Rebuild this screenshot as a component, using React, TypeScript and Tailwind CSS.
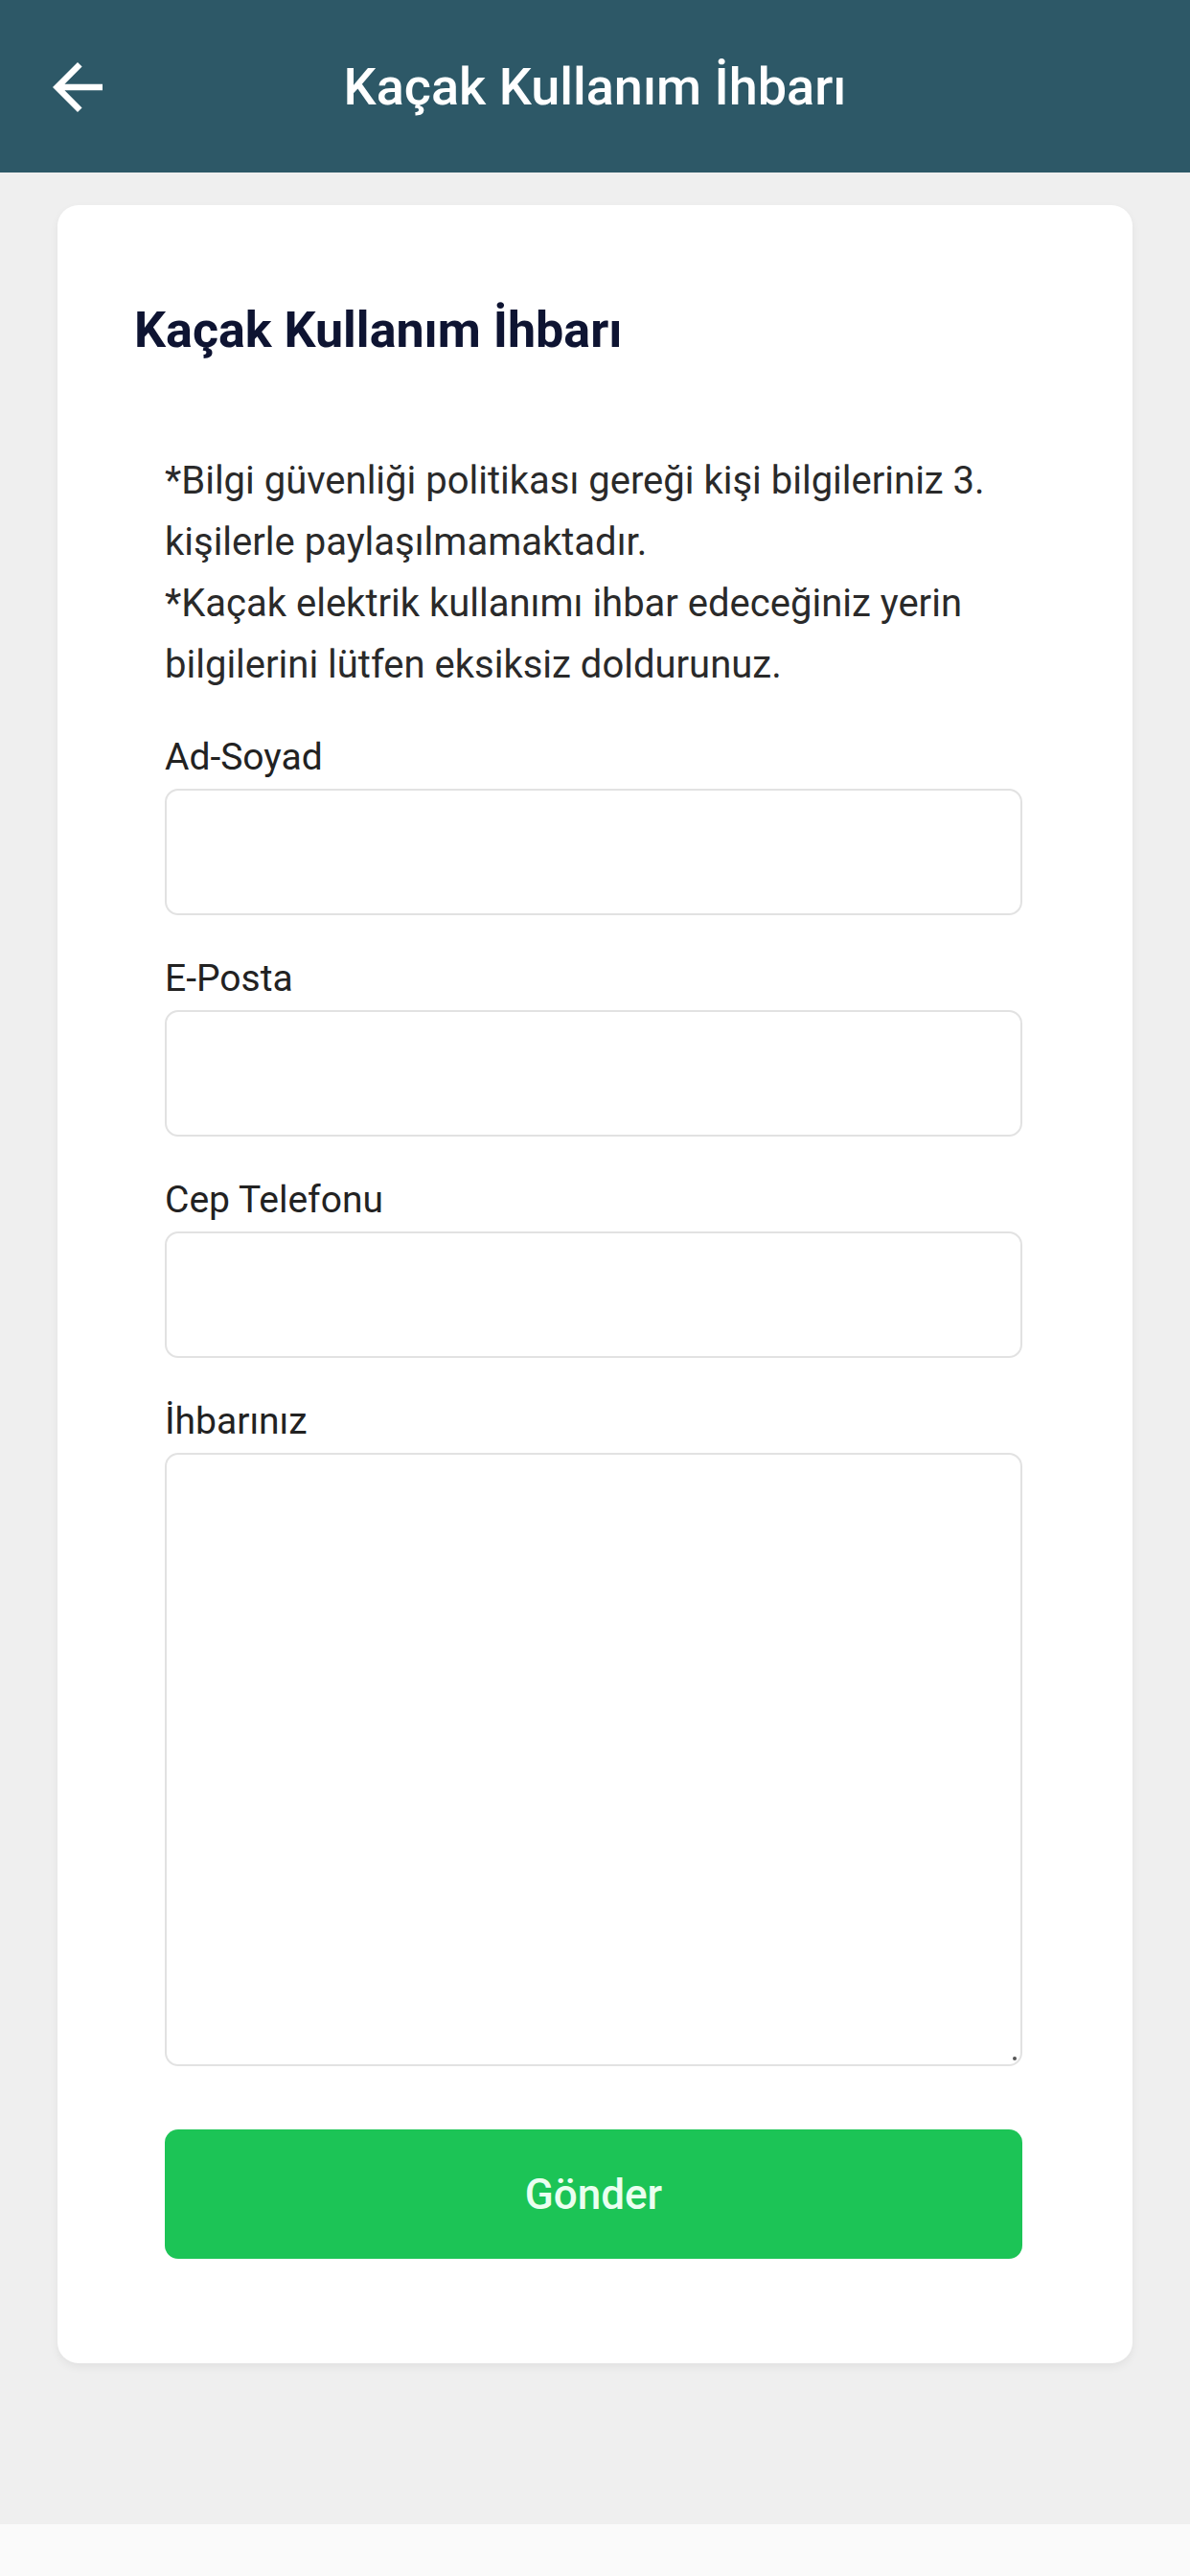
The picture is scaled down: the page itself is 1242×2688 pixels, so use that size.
import { useState } from "react"

const fields = [
  { id: "name", label: "Ad-Soyad", type: "text" },
  { id: "email", label: "E-Posta", type: "email" },
  { id: "phone", label: "Cep Telefonu", type: "tel" },
]

function BackArrow() {
  return (
    <svg viewBox="0 0 24 24" className="h-[78px] w-[78px] fill-white">
      <path d="M20 11H7.83l5.59-5.59L12 4l-8 8 8 8 1.41-1.41L7.83 13H20v-2z" />
    </svg>
  )
}

export default function App() {
  const [values, setValues] = useState<Record<string, string>>({})

  return (
    <div className="flex min-h-[2688px] flex-col bg-[#efefef] font-['Roboto',sans-serif]">
      {/* top bar */}
      <header className="relative flex h-[180px] items-center justify-center bg-[#2d5867]">
        <button className="absolute left-[42px] top-[52px]">
          <BackArrow />
        </button>
        <h1 className="text-[54px] font-medium text-white">Kaçak Kullanım İhbarı</h1>
      </header>

      <main className="flex-1 px-[60px] pt-[34px]">
        <div className="rounded-[22px] bg-white pb-[109px] pl-[80px] pr-[83px] pt-[103px] shadow-[0_4px_10px_rgba(0,0,0,0.06)]">
          <h2 className="text-[52px] font-bold leading-[56px] text-[#0e1432]">Kaçak Kullanım İhbarı</h2>

          <div className="pl-[32px] pr-[32px] pt-[97px]">
            <p className="text-[40px] leading-[64px] text-[#2a2a2a]">
              *Bilgi güvenliği politikası gereği kişi bilgileriniz 3.
              <br />
              kişilerle paylaşılmamaktadır.
              <br />
              *Kaçak elektrik kullanımı ihbar edeceğiniz yerin
              <br />
              bilgilerini lütfen eksiksiz doldurunuz.
            </p>

            <div className="mt-[42px] flex flex-col gap-[44px]">
              {fields.map(f => (
                <div key={f.id} className="flex flex-col gap-[11px]">
                  <label htmlFor={f.id} className="text-[39px] leading-[44px] text-[#222]">
                    {f.label}
                  </label>
                  <input
                    id={f.id}
                    type={f.type}
                    value={values[f.id] ?? ""}
                    onChange={e => setValues({ ...values, [f.id]: e.target.value })}
                    className="h-[132px] w-full rounded-[14px] border-2 border-[#e2e2e2] bg-white px-6 text-[36px] outline-none"
                  />
                </div>
              ))}

              <div className="flex flex-col gap-[11px]">
                <label htmlFor="note" className="text-[39px] leading-[44px] text-[#222]">
                  İhbarınız
                </label>
                <div className="relative">
                  <textarea
                    id="note"
                    value={values.note ?? ""}
                    onChange={e => setValues({ ...values, note: e.target.value })}
                    className="block h-[640px] w-full resize-none rounded-[14px] border-2 border-[#e2e2e2] bg-white p-6 text-[36px] outline-none"
                  />
                  <span className="absolute bottom-[6px] right-[6px] h-[4px] w-[4px] rounded-full bg-[#555]" />
                </div>
              </div>
            </div>

            <button className="mt-[66px] flex h-[135px] w-full items-center justify-center rounded-[14px] bg-[#1cc456] text-[44px] font-medium text-[#eafff0]">
              Gönder
            </button>
          </div>
        </div>
      </main>

      <div className="h-[54px] bg-[#fafafa]" />
    </div>
  )
}
